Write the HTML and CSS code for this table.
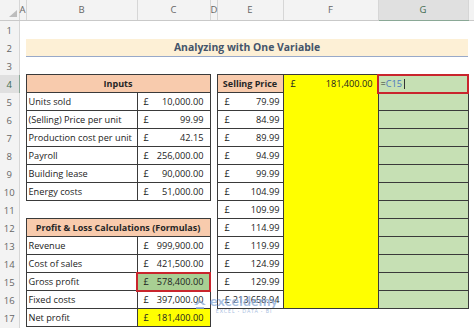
FILE: index.html
```html
<!DOCTYPE html>
<html>
<head>
<meta charset="utf-8">
<title>Analyzing with One Variable</title>
<link rel="stylesheet" href="styles.css">
</head>
<body>
<div class="sheet">
<table class="grid">
<colgroup>
<col class="w-rh"><col class="w-a"><col class="w-b"><col class="w-c"><col class="w-d"><col class="w-e"><col class="w-f"><col class="w-g"><col class="w-h">
</colgroup>
<thead>
<tr class="hdr">
<th class="corner"><div class="corner-in"><span class="tri"></span></div></th>
<th>A</th><th>B</th><th>C</th><th>D</th><th>E</th><th>F</th><th class="sel">G</th><th class="last"></th>
</tr>
</thead>
<tbody>
<tr><th class="rn">1</th><td></td><td></td><td></td><td></td><td></td><td></td><td></td><td></td></tr>
<tr><th class="rn">2</th><td></td><td colspan="6" class="title">Analyzing with One Variable</td><td></td></tr>
<tr><th class="rn">3</th><td></td><td></td><td></td><td></td><td></td><td></td><td></td><td></td></tr>
<tr><th class="rn rsel">4</th><td></td><td colspan="2" class="hd bx">Inputs</td><td></td><td class="hd bx">Selling Price</td><td class="yel ftop"><div class="acct pf"><span>£</span><span>181,400.00</span></div></td><td class="grn bx active"><span class="eq">=</span><span class="ref">C15</span><span class="caret"></span></td><td></td></tr>
<tr><th class="rn">5</th><td></td><td class="bx lbl">Units sold</td><td class="bx"><div class="acct pc"><span>£</span><span>10,000.00</span></div></td><td></td><td class="bx"><div class="acct pe"><span>£</span><span>79.99</span></div></td><td class="yel"></td><td class="grn bx"></td><td></td></tr>
<tr><th class="rn">6</th><td></td><td class="bx lbl">(Selling) Price per unit</td><td class="bx"><div class="acct pc"><span>£</span><span>99.99</span></div></td><td></td><td class="bx"><div class="acct pe"><span>£</span><span>84.99</span></div></td><td class="yel"></td><td class="grn bx"></td><td></td></tr>
<tr><th class="rn">7</th><td></td><td class="bx lbl">Production cost per unit</td><td class="bx"><div class="acct pc"><span>£</span><span>42.15</span></div></td><td></td><td class="bx"><div class="acct pe"><span>£</span><span>89.99</span></div></td><td class="yel"></td><td class="grn bx"></td><td></td></tr>
<tr><th class="rn">8</th><td></td><td class="bx lbl">Payroll</td><td class="bx"><div class="acct pc"><span>£</span><span>256,000.00</span></div></td><td></td><td class="bx"><div class="acct pe"><span>£</span><span>94.99</span></div></td><td class="yel"></td><td class="grn bx"></td><td></td></tr>
<tr><th class="rn">9</th><td></td><td class="bx lbl">Building lease</td><td class="bx"><div class="acct pc"><span>£</span><span>90,000.00</span></div></td><td></td><td class="bx"><div class="acct pe"><span>£</span><span>99.99</span></div></td><td class="yel"></td><td class="grn bx"></td><td></td></tr>
<tr><th class="rn">10</th><td></td><td class="bx lbl">Energy costs</td><td class="bx"><div class="acct pc"><span>£</span><span>51,000.00</span></div></td><td></td><td class="bx"><div class="acct pe"><span>£</span><span>104.99</span></div></td><td class="yel"></td><td class="grn bx"></td><td></td></tr>
<tr><th class="rn">11</th><td></td><td></td><td></td><td></td><td class="bx"><div class="acct pe"><span>£</span><span>109.99</span></div></td><td class="yel"></td><td class="grn bx"></td><td></td></tr>
<tr><th class="rn">12</th><td></td><td colspan="2" class="hd bx">Profit &amp; Loss Calculations (Formulas)</td><td></td><td class="bx"><div class="acct pe"><span>£</span><span>114.99</span></div></td><td class="yel"></td><td class="grn bx"></td><td></td></tr>
<tr><th class="rn">13</th><td></td><td class="bx lbl">Revenue</td><td class="bx"><div class="acct pc"><span>£</span><span>999,900.00</span></div></td><td></td><td class="bx"><div class="acct pe"><span>£</span><span>119.99</span></div></td><td class="yel"></td><td class="grn bx"></td><td></td></tr>
<tr><th class="rn">14</th><td></td><td class="bx lbl">Cost of sales</td><td class="bx"><div class="acct pc"><span>£</span><span>421,500.00</span></div></td><td></td><td class="bx"><div class="acct pe"><span>£</span><span>124.99</span></div></td><td class="yel"></td><td class="grn bx"></td><td></td></tr>
<tr><th class="rn">15</th><td></td><td class="bx lbl">Gross profit</td><td class="bx gp picked"><div class="acct pc"><span>£</span><span>578,400.00</span></div></td><td></td><td class="bx"><div class="acct pe"><span>£</span><span>129.99</span></div></td><td class="yel"></td><td class="grn bx"></td><td></td></tr>
<tr><th class="rn">16</th><td></td><td class="bx lbl">Fixed costs</td><td class="bx"><div class="acct pc"><span>£</span><span>397,000.00</span></div></td><td></td><td class="bx"><div class="acct pe"><span>£</span><span>213,658.94</span></div></td><td class="yel fbot"></td><td class="grn bx"></td><td></td></tr>
<tr><th class="rn">17</th><td></td><td class="bx lbl">Net profit</td><td class="bx yel"><div class="acct pc"><span>£</span><span>181,400.00</span></div></td><td></td><td></td><td></td><td></td><td></td></tr>
<tr><th class="rn"></th><td></td><td></td><td></td><td></td><td></td><td></td><td></td><td></td></tr>
</tbody>
</table>
<div class="watermark">
<svg class="wm-icon" width="14" height="12" viewBox="0 0 14 12"><path d="M1 6 L7 1 L13 6 L10 6 L7 3.5 L4 6 Z" fill="currentColor"/><path d="M3 8 H11 V10 H3 Z" fill="currentColor"/></svg>
<div class="wm-text"><div class="wm-name">exceldemy</div><div class="wm-tag">EXCEL · DATA · BI</div></div>
</div>
</div>
</body>
</html>
```

FILE: styles.css
```css
html, body {
  margin: 0;
  padding: 0;
  background: #ffffff;
}

.sheet {
  position: relative;
  width: 474px;
  height: 328px;
  overflow: hidden;
  font-family: "Open Sans", "Noto Sans", "Liberation Sans", sans-serif;
  color: #222222;
}

.grid {
  border-collapse: collapse;
  table-layout: fixed;
  width: 474px;
}

.w-rh { width: 19px; }
.w-a { width: 7px; }
.w-b { width: 111px; }
.w-c { width: 73px; }
.w-d { width: 7px; }
.w-e { width: 66px; }
.w-f { width: 95px; }
.w-g { width: 90px; }
.w-h { width: 6px; }

.hdr { height: 20px; }
tbody tr { height: 18px; }

.hdr th {
  background: #f3f3f3;
  color: #666666;
  font-weight: normal;
  font-size: 9.5px;
  padding: 0;
  border-right: 1px solid #d6d6d6;
  border-bottom: 1px solid #c9c9c9;
  vertical-align: middle;
  line-height: 1;
}
.hdr th.last { border-right: none; }
.hdr th.sel {
  background: #e0e0e0;
  color: #3f6b50;
  border-bottom: 1px solid #8aa896;
}

.corner { vertical-align: bottom !important; }
.corner-in {
  display: flex;
  justify-content: flex-end;
  align-items: flex-end;
  height: 20px;
  padding: 0 2px 3px 0;
  box-sizing: border-box;
}
.tri {
  width: 0;
  height: 0;
  border-left: 8px solid transparent;
  border-bottom: 7px solid #bdbdbd;
}

th.rn {
  background: #f3f3f3;
  color: #666666;
  font-weight: normal;
  font-size: 9.5px;
  padding: 2px 0 0 0;
  border-right: 1px solid #d6d6d6;
  line-height: 1;
  text-align: center;
}
th.rsel {
  background: #e0e0e0;
  color: #3f6b50;
  border-right: 1px solid #8aa896;
}

td {
  padding: 0;
  font-size: 9.2px;
  line-height: 1;
  white-space: nowrap;
  overflow: hidden;
  vertical-align: middle;
}

.bx { border: 1px solid #3a3a3a; }

.lbl { padding: 0 0 0 2px; }

.title {
  background: #fdf0d6;
  border-bottom: 1px solid #98a9c9;
  color: #44546a;
  font-weight: bold;
  font-size: 10.4px;
  text-align: center;
}

.hd {
  background: #f8cbad;
  font-weight: bold;
  font-size: 9px;
  text-align: center;
  color: #262626;
}

.acct {
  display: flex;
  justify-content: space-between;
}
.pc { padding-left: 6px; padding-right: 6px; }
.pe { padding-left: 7px; padding-right: 3px; }
.pf { padding-left: 7px; padding-right: 5px; }

.yel { background: #ffff00; }
.ftop { border-top: 1px solid #3a3a3a; }
.fbot { border-bottom: 1px solid #3a3a3a; }

.grn { background: #c6e0b4; }
.gp { background: #a8cf93; }

.active {
  outline: 2px solid #c9252d;
  outline-offset: -1px;
  padding-left: 2px;
}
.picked {
  outline: 2px solid #c9252d;
  outline-offset: -1px;
}

.eq { color: #333333; }
.ref { color: #4a78c0; }
.caret {
  display: inline-block;
  width: 1px;
  height: 10px;
  background: #333333;
  margin-left: 2px;
  vertical-align: -2px;
}

.watermark {
  position: absolute;
  left: 193px;
  top: 294px;
  display: flex;
  align-items: center;
  gap: 3px;
  color: #8aaad6;
  opacity: 0.75;
  pointer-events: none;
}
.wm-icon { display: block; }
.wm-text {
  display: flex;
  flex-direction: column;
  align-items: center;
}
.wm-name {
  font-family: Lato, sans-serif;
  font-weight: bold;
  font-size: 14px;
  line-height: 14px;
  letter-spacing: 0.2px;
}
.wm-tag {
  font-family: Lato, sans-serif;
  font-size: 5px;
  letter-spacing: 1px;
  line-height: 7px;
}
```
